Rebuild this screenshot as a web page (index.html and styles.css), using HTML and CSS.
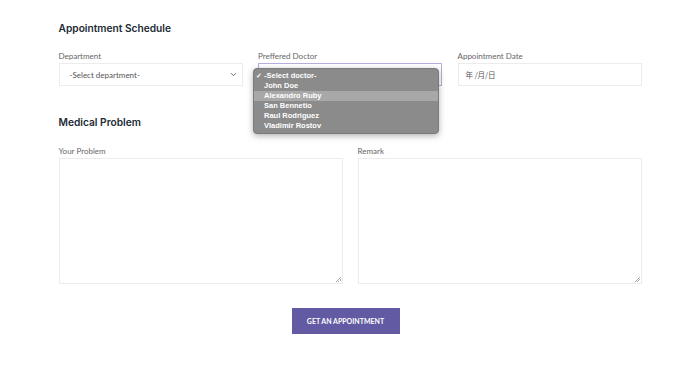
FILE: index.html
```html
<!DOCTYPE html>
<html lang="en">

<head>
    <meta charset="UTF-8">
    <meta name="viewport" content="width=device-width, initial-scale=1.0">
    <title>Appointment</title>
    <link rel="stylesheet" href="styles.css">
</head>

<body>
    <main class="appointment">
        <h2 class="section-title">Appointment Schedule</h2>
        <div class="row-3">
            <div class="field">
                <label>Department</label>
                <div class="select-box">
                    <span>-Select department-</span>
                    <svg class="chevron" width="7" height="5" viewBox="0 0 7 5">
                        <path d="M1 1.2l2.5 2.5 2.5-2.5" fill="none" stroke="#666" stroke-width="1"/>
                    </svg>
                </div>
            </div>
            <div class="field">
                <label>Preffered Doctor</label>
                <div class="select-box focused"></div>
                <!-- open native dropdown list -->
                <ul class="dropdown">
                    <li class="checked">-Select doctor-</li>
                    <li>John Doe</li>
                    <li class="hover">Alexandro Ruby</li>
                    <li>San Bennetio</li>
                    <li>Raul Rodriguez</li>
                    <li>Vladimir Rostov</li>
                </ul>
            </div>
            <div class="field">
                <label>Appointment Date</label>
                <div class="select-box date">年 /月/日</div>
            </div>
        </div>

        <h2 class="section-title second">Medical Problem</h2>
        <div class="row-2">
            <div class="field">
                <label>Your Problem</label>
                <div class="textarea"><span class="grip"></span></div>
            </div>
            <div class="field">
                <label>Remark</label>
                <div class="textarea"><span class="grip"></span></div>
            </div>
        </div>

        <div class="actions">
            <button type="button">GET AN APPOINTMENT</button>
        </div>
    </main>
</body>

</html>
```

FILE: styles.css
```css
body {
    margin: 0;
    padding: 0;
    background-color: #fff;
    font-family: Lato, "Open Sans", sans-serif;
}

.appointment {
    width: 583px;
    margin: 0 auto;
    padding-top: 21px;
}

.section-title {
    font-family: Inter, "Noto Sans", sans-serif;
    font-size: 10.2px;
    font-weight: 600;
    color: #222a35;
    margin: 0 0 15px 0;
    line-height: 15px;
}

.section-title.second {
    margin-top: 29px;
    margin-bottom: 16px;
}

.row-3 {
    display: grid;
    grid-template-columns: 184px 184px 184px;
    column-gap: 15.5px;
}

.row-2 {
    display: grid;
    grid-template-columns: 284px 284px;
    column-gap: 15px;
}

.field {
    position: relative;
}

label {
    display: block;
    font-size: 8px;
    color: #666;
    line-height: 10px;
    margin-bottom: 2px;
}

.select-box {
    height: 23px;
    border: 1px solid #ececec;
    box-sizing: border-box;
    display: flex;
    align-items: center;
    justify-content: space-between;
    padding: 0 5px 0 10px;
    font-size: 8px;
    color: #555;
}

.select-box.focused {
    border-color: #b6aee0;
}

.select-box.date {
    padding-left: 7px;
    font-family: "Noto Sans CJK SC", sans-serif;
    font-size: 7.5px;
}

.dropdown {
    position: absolute;
    left: -5px;
    top: 17px;
    width: 186px;
    margin: 0;
    padding: 2px 0 2px 0;
    list-style: none;
    background-color: #8b8b8b;
    border: 1px solid #7a7a7a;
    border-radius: 4px;
    box-sizing: border-box;
    box-shadow: 0 2px 6px rgba(0, 0, 0, 0.3);
    z-index: 2;
}

.dropdown li {
    font-family: "Liberation Sans", Arial, sans-serif;
    font-size: 7.5px;
    font-weight: bold;
    color: #fff;
    line-height: 10px;
    padding-left: 10px;
    position: relative;
}

.dropdown li.hover {
    background-color: #a8a8a8;
}

.dropdown li.checked::before {
    content: "\2713";
    position: absolute;
    left: 2px;
    font-size: 7px;
}

.textarea {
    height: 126px;
    border: 1px solid #ececec;
    box-sizing: border-box;
    position: relative;
}

.grip {
    position: absolute;
    right: 1px;
    bottom: 1px;
    width: 5px;
    height: 5px;
    background: linear-gradient(135deg, transparent 45%, #aaa 45%, #aaa 55%, transparent 55%, transparent 70%, #aaa 70%, #aaa 80%, transparent 80%);
}

.actions {
    display: flex;
    justify-content: center;
    margin-top: 24px;
    padding-right: 9px;
}

button {
    width: 108px;
    height: 26px;
    background-color: #625aa2;
    color: #fff;
    border: none;
    font-family: Lato, sans-serif;
    font-weight: bold;
    font-size: 7px;
    cursor: pointer;
}
```
